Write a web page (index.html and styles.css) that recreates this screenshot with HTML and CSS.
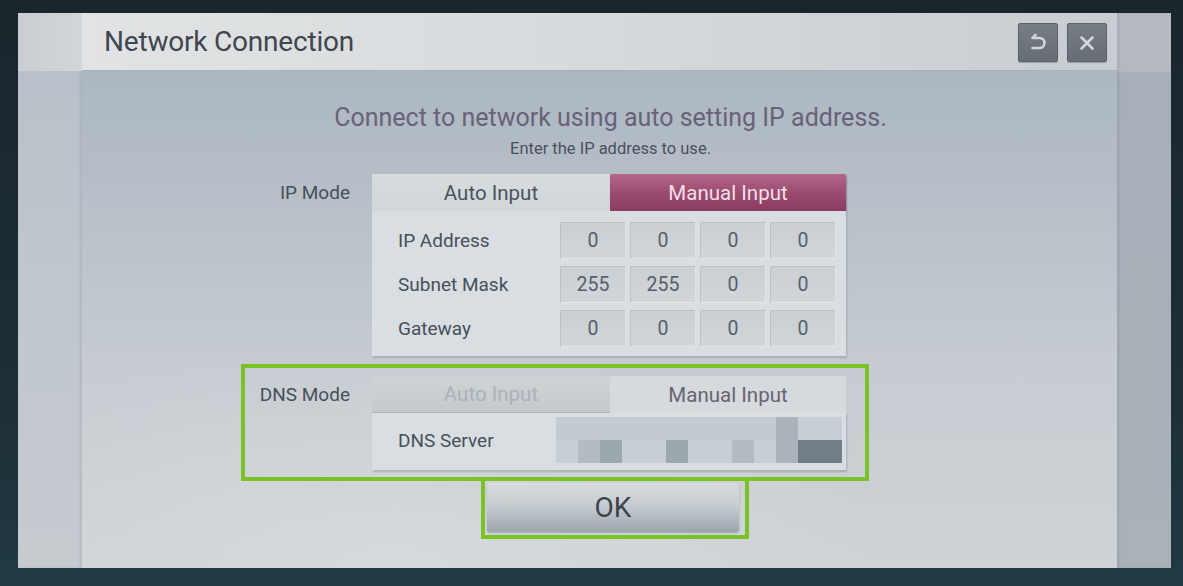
FILE: index.html
```html
<!DOCTYPE html>
<html lang="en">
<head>
<meta charset="utf-8">
<title>Network Connection</title>
<link rel="stylesheet" href="styles.css">
</head>
<body>
<div class="screen">
  <div class="strip strip-left"><div class="strip-top"></div></div>
  <section class="dialog">
    <header class="titlebar">
      <h1 class="title">Network Connection</h1>
      <div class="tools">
        <button class="tool" aria-label="Back">
          <svg viewBox="0 0 24 24" width="24" height="24"><path d="M9.5 3.8 L6.5 6.8 M6.5 7 H13.5 A5 5 0 0 1 13.5 17 H6.5" fill="none" stroke="#d3d7da" stroke-width="2.6" stroke-linecap="round" stroke-linejoin="round"/></svg>
        </button>
        <button class="tool" aria-label="Close">
          <svg viewBox="0 0 24 24" width="24" height="24"><path d="M6.5 6.5 L17.5 17.5 M17.5 6.5 L6.5 17.5" fill="none" stroke="#d3d7da" stroke-width="2.6" stroke-linecap="round"/></svg>
        </button>
      </div>
    </header>
    <div class="content">
      <div class="intro">
        <p class="headline">Connect to network using auto setting IP address.</p>
        <p class="subline">Enter the IP address to use.</p>
      </div>
      <div class="form">
        <div class="section">
          <div class="label">IP Mode</div>
          <div class="segments">
            <div class="seg seg-left">Auto Input</div>
            <div class="seg seg-right seg-active">Manual Input</div>
          </div>
          <div class="panel">
            <div class="row">
              <span class="row-label">IP Address</span>
              <div class="octets"><span class="octet">0</span><span class="octet">0</span><span class="octet">0</span><span class="octet">0</span></div>
            </div>
            <div class="row">
              <span class="row-label">Subnet Mask</span>
              <div class="octets"><span class="octet">255</span><span class="octet">255</span><span class="octet">0</span><span class="octet">0</span></div>
            </div>
            <div class="row">
              <span class="row-label">Gateway</span>
              <div class="octets"><span class="octet">0</span><span class="octet">0</span><span class="octet">0</span><span class="octet">0</span></div>
            </div>
          </div>
        </div>
        <div class="section section-highlight">
          <div class="label">DNS Mode</div>
          <div class="segments">
            <div class="seg seg-left seg-disabled">Auto Input</div>
            <div class="seg seg-right seg-plain">Manual Input</div>
          </div>
          <div class="panel panel-dns">
            <div class="row row-dns">
              <span class="row-label">DNS Server</span>
              <div class="redacted">
                <span class="px p1"></span><span class="px p1"></span><span class="px p1"></span><span class="px p1"></span><span class="px p1"></span><span class="px p1"></span><span class="px p1"></span><span class="px p1"></span><span class="px p1"></span><span class="px p1"></span><span class="px p3"></span><span class="px p0"></span><span class="px p0"></span>
                <span class="px p0"></span><span class="px p2"></span><span class="px p4"></span><span class="px p0"></span><span class="px p0"></span><span class="px p4"></span><span class="px p0"></span><span class="px p0"></span><span class="px p2"></span><span class="px p0"></span><span class="px p3"></span><span class="px p5"></span><span class="px p5"></span>
              </div>
            </div>
          </div>
        </div>
        <div class="ok-frame"><button class="ok">OK</button></div>
      </div>
    </div>
  </section>
  <div class="strip strip-right"></div>
</div>
</body>
</html>
```

FILE: styles.css
```css
html, body {
  margin: 0;
  padding: 0;
}

body {
  width: 1183px;
  height: 586px;
  overflow: hidden;
  background: linear-gradient(180deg, #1a252c 0%, #1e2f37 70%, #213a44 100%);
  font-family: Roboto, "Liberation Sans", sans-serif;
}

.screen {
  display: flex;
  height: 555px;
  margin: 13px 12px 0 18px;
}

.strip-left {
  width: 64px;
  display: flex;
  flex-direction: column;
  background: linear-gradient(180deg, #b6bfc8 0%, #bfc6cd 45%, #c6cbd0 100%);
  box-shadow: inset -2px 0 3px rgba(60, 70, 80, 0.12);
}

.strip-top {
  height: 58px;
  background: linear-gradient(90deg, #c9cdd1, #d3d6d8);
}

.strip-right {
  width: 54px;
  background: linear-gradient(180deg, #b5bac0 0, #b5bac0 58px, #a7afb8 60px, #aab1b9 100%);
  box-shadow: inset 2px 0 3px rgba(60, 70, 80, 0.12);
}

.dialog {
  flex: 1;
  display: flex;
  flex-direction: column;
  min-width: 0;
}

.titlebar {
  height: 57px;
  display: flex;
  align-items: center;
  justify-content: space-between;
  padding: 0 10px 0 22px;
  background: linear-gradient(90deg, #e1e3e4 0%, #d8dbdd 45%, #c8cdd2 100%);
  border-bottom: 1px solid #a8b0b8;
}

.title {
  margin: 0;
  font-size: 28px;
  font-weight: 400;
  color: #3e464f;
  letter-spacing: -0.2px;
}

.tools {
  display: flex;
  gap: 9px;
  margin-top: 2px;
}

.tool {
  width: 40px;
  height: 39px;
  padding: 0;
  display: flex;
  align-items: center;
  justify-content: center;
  background: linear-gradient(180deg, #767d85, #666d75);
  border: 1px solid #5b6269;
  border-radius: 2px;
  box-shadow: 0 1px 1px rgba(40, 45, 50, 0.3);
}

.content {
  flex: 1;
  padding-top: 32px;
  background:
    radial-gradient(ellipse 700px 320px at 30% 100%, rgba(220, 225, 226, 0.55), rgba(220, 225, 226, 0) 70%),
    linear-gradient(180deg, #acb7c2 0%, #b9c1c9 30%, #c6ccd1 60%, #cdd3d6 100%);
}

.intro {
  padding-left: 22px;
  text-align: center;
}

.headline {
  margin: 0;
  font-size: 25px;
  line-height: 30px;
  color: #686278;
}

.subline {
  margin: 6px 0 0;
  font-size: 16.5px;
  line-height: 20px;
  color: #4b515b;
}

.form {
  width: 628px;
  margin: 11px 0 0 159px;
}

.section {
  display: grid;
  grid-template-columns: 105px 474px;
  column-gap: 22px;
  padding: 0 19px 0 0;
  border: 4px solid transparent;
}

.section-highlight {
  margin-top: 4px;
  padding: 8px 19px 7px 0;
  border-color: #7bc225;
}

.label {
  align-self: center;
  text-align: right;
  font-size: 19px;
  color: #48505a;
  white-space: nowrap;
}

.segments {
  display: flex;
  height: 37px;
}

.seg {
  display: flex;
  align-items: center;
  justify-content: center;
  font-size: 20.5px;
  color: #4b535c;
  background: linear-gradient(180deg, #d7dcdf, #d0d6d9);
  white-space: nowrap;
}

.seg-left {
  width: 238px;
}

.seg-right {
  width: 236px;
}

.seg-active {
  background: linear-gradient(180deg, #b26788 0%, #9c4c6f 50%, #8a3b5e 100%);
  color: #f2dfe8;
  border-radius: 2px 2px 0 0;
  box-shadow: 1px 1px 2px rgba(70, 30, 50, 0.35);
}

.seg-disabled {
  background: linear-gradient(180deg, #cfd4d7, #c3c9cd);
  color: #abb2b8;
  border-bottom: 1px solid #aeb5bb;
  box-shadow: 1px 1px 1px rgba(90, 100, 110, 0.2);
}

.seg-plain {
  background: #d4dadd;
  color: #6a6470;
}

.panel {
  grid-column: 2;
  display: flex;
  flex-direction: column;
  gap: 7px;
  padding: 11px 10px 9px 26px;
  background: #d8dee1;
  box-shadow: 1px 2px 2px rgba(90, 100, 110, 0.3);
}

.panel-dns {
  padding: 4px 4px 7px 26px;
}

.row {
  display: flex;
  align-items: center;
  height: 37px;
}

.row-dns {
  height: 46px;
}

.row-label {
  flex: 1;
  font-size: 19px;
  color: #48505a;
}

.octets {
  display: flex;
  gap: 4px;
}

.octet {
  box-sizing: border-box;
  width: 66px;
  height: 37px;
  display: flex;
  align-items: center;
  justify-content: center;
  font-size: 19.5px;
  color: #58606a;
  background: linear-gradient(180deg, #c9cfd3, #d0d6d9);
  border: 1px solid #bcc3c8;
  border-bottom-color: #e3e7e9;
  border-right-color: #e0e4e6;
}

.redacted {
  display: grid;
  grid-template-columns: repeat(13, 22px);
  grid-template-rows: 23px 23px;
}

.p0 { background: #c6cfd3; }
.p1 { background: #c1cbd0; }
.p2 { background: #b2bcc2; }
.p3 { background: #abb3ba; }
.p4 { background: #9ca7ae; }
.p5 { background: #737d87; }

.ok-frame {
  box-sizing: border-box;
  width: 268px;
  height: 62px;
  margin: -4px 0 0 240px;
  padding: 2px 6px 3px 2px;
  border: 4px solid #7bc225;
}

.ok {
  width: 100%;
  height: 49px;
  border: 0;
  border-radius: 2px;
  padding: 0;
  font-family: inherit;
  font-size: 28px;
  color: #3c434b;
  background: linear-gradient(180deg, #d7dcdf 0%, #c6ccd0 45%, #9da5ac 100%);
  box-shadow: 0 1px 2px rgba(60, 70, 80, 0.3);
}
```
